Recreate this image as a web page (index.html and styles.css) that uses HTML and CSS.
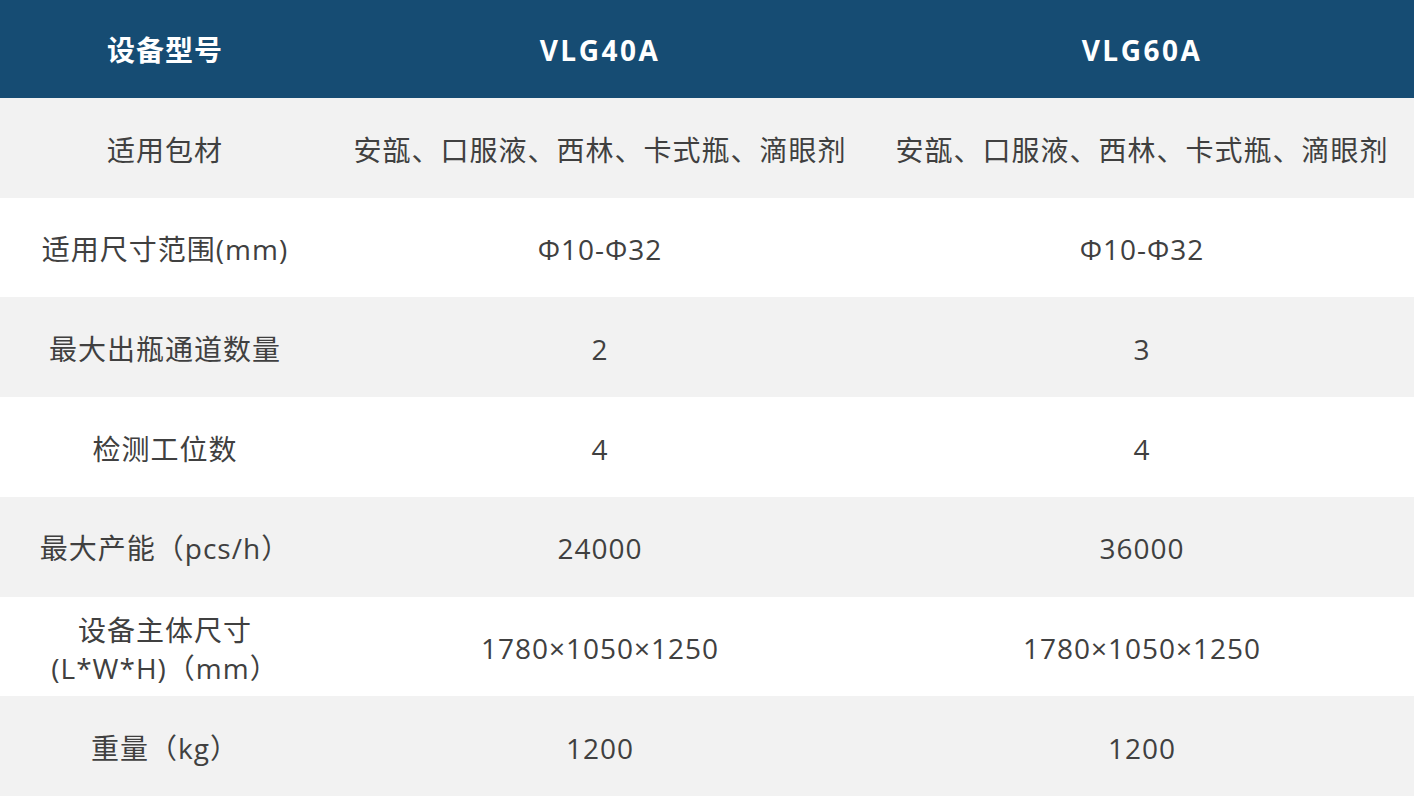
FILE: index.html
```html
<!DOCTYPE html>
<html lang="zh">
<head>
<meta charset="utf-8">
<link rel="stylesheet" href="styles.css">
</head>
<body>
<div class="spec">
  <div class="row head">
    <div class="cell">设备型号</div>
    <div class="cell latin">VLG40A</div>
    <div class="cell latin">VLG60A</div>
  </div>
  <div class="row alt">
    <div class="cell">适用包材</div>
    <div class="cell">安瓿、口服液、西林、卡式瓶、滴眼剂</div>
    <div class="cell">安瓿、口服液、西林、卡式瓶、滴眼剂</div>
  </div>
  <div class="row">
    <div class="cell">适用尺寸范围(mm)</div>
    <div class="cell">Φ10-Φ32</div>
    <div class="cell">Φ10-Φ32</div>
  </div>
  <div class="row alt">
    <div class="cell">最大出瓶通道数量</div>
    <div class="cell">2</div>
    <div class="cell">3</div>
  </div>
  <div class="row">
    <div class="cell">检测工位数</div>
    <div class="cell">4</div>
    <div class="cell">4</div>
  </div>
  <div class="row alt">
    <div class="cell">最大产能（pcs/h）</div>
    <div class="cell">24000</div>
    <div class="cell">36000</div>
  </div>
  <div class="row">
    <div class="cell two">设备主体尺寸<br>(L*W*H)（mm）</div>
    <div class="cell">1780×1050×1250</div>
    <div class="cell">1780×1050×1250</div>
  </div>
  <div class="row alt">
    <div class="cell">重量（kg）</div>
    <div class="cell">1200</div>
    <div class="cell">1200</div>
  </div>
</div>
</body>
</html>
```
FILE: styles.css
```css
html, body {
  margin: 0;
  padding: 0;
  background: #ffffff;
}
.spec {
  width: 1414px;
  height: 796px;
  display: grid;
  grid-template-rows: 98px repeat(7, 1fr);
  font-family: "Open Sans", "Noto Sans CJK SC", sans-serif;
  color: #404040;
  font-size: 28px;
  letter-spacing: 1px;
}
.row {
  display: grid;
  grid-template-columns: 330px 540px 1fr;
  background: #ffffff;
}
.row.alt {
  background: #f2f2f2;
}
.row.head {
  background: #164c73;
  color: #ffffff;
  font-weight: bold;
}
.cell {
  display: flex;
  align-items: center;
  justify-content: center;
  text-align: center;
  white-space: nowrap;
  padding-top: 5px;
  line-height: 1.2;
}
.head .cell {
  padding-top: 3px;
}
.head .latin {
  letter-spacing: 2.5px;
}
.cell.two {
  line-height: 38px;
  padding-top: 5px;
}
```
